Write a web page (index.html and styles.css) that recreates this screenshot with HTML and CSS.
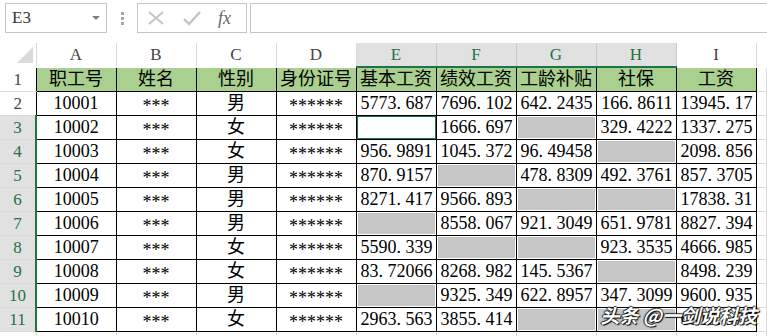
FILE: index.html
```html
<!DOCTYPE html>
<html lang="zh-CN">
  <head>
    <meta charset="UTF-8" />
    <meta name="viewport" content="width=device-width, initial-scale=1.0" />
    <title>工资表</title>
    <link rel="stylesheet" href="styles.css">
  </head>
  <body>
    <div class="toolbar">
      <div class="name-box">
        <span>E3</span>
        <svg class="caret" width="8" height="4" viewBox="0 0 8 4"><polygon points="0,0 8,0 4,4" fill="#808080"/></svg>
      </div>
      <div class="grip">
        <svg width="3" height="13" viewBox="0 0 3 13"><rect x="0" y="0" width="3" height="3" fill="#a6a6a6"/><rect x="0" y="5" width="3" height="3" fill="#a6a6a6"/><rect x="0" y="10" width="3" height="3" fill="#a6a6a6"/></svg>
      </div>
      <div class="formula-buttons">
        <svg width="16" height="14" viewBox="0 0 16 14"><path d="M1 1 L15 13 M15 1 L1 13" stroke="#c4c4c4" stroke-width="2"/></svg>
        <svg width="18" height="15" viewBox="0 0 18 15"><path d="M1 8 L6 13 L17 1" stroke="#c4c4c4" stroke-width="2.4" fill="none"/></svg>
        <span class="fx">fx</span>
      </div>
      <div class="formula-bar"></div>
    </div>

    <div class="sheet">
      <table>
        <colgroup>
          <col class="c-rh">
          <col class="c-col"><col class="c-col"><col class="c-col"><col class="c-col"><col class="c-col">
          <col class="c-col"><col class="c-col"><col class="c-col"><col class="c-col">
          <col>
        </colgroup>
        <tr class="col-head">
          <th class="corner"><svg width="16" height="16" viewBox="0 0 16 16"><polygon points="16,0 16,16 0,16" fill="#dadada"/></svg></th>
          <th>A</th><th>B</th><th>C</th><th>D</th>
          <th class="on">E</th><th class="on">F</th><th class="on">G</th><th class="on">H</th>
          <th>I</th><th class="empty"></th>
        </tr>
        <tr class="title">
          <th class="rh">1</th>
          <td>职工号</td><td>姓名</td><td>性别</td><td>身份证号</td><td>基本工资</td><td>绩效工资</td><td>工龄补贴</td><td>社保</td><td>工资</td>
          <td class="grid"></td>
        </tr>
        <tr>
          <th class="rh">2</th>
          <td>10001</td><td class="mask">***</td><td>男</td><td class="mask">******</td>
          <td class="num">5773<span class="pt">.</span>687</td><td class="num">7696<span class="pt">.</span>102</td><td class="num">642<span class="pt">.</span>2435</td><td class="num">166<span class="pt">.</span>8611</td><td class="num">13945<span class="pt">.</span>17</td>
          <td class="grid"></td>
        </tr>
        <tr>
          <th class="rh on">3</th>
          <td>10002</td><td class="mask">***</td><td>女</td><td class="mask">******</td>
          <td class="active"></td><td class="num">1666<span class="pt">.</span>697</td><td class="sel"></td><td class="num">329<span class="pt">.</span>4222</td><td class="num">1337<span class="pt">.</span>275</td>
          <td class="grid"></td>
        </tr>
        <tr>
          <th class="rh on">4</th>
          <td>10003</td><td class="mask">***</td><td>女</td><td class="mask">******</td>
          <td class="num">956<span class="pt">.</span>9891</td><td class="num">1045<span class="pt">.</span>372</td><td class="num">96<span class="pt">.</span>49458</td><td class="sel"></td><td class="num">2098<span class="pt">.</span>856</td>
          <td class="grid"></td>
        </tr>
        <tr>
          <th class="rh on">5</th>
          <td>10004</td><td class="mask">***</td><td>男</td><td class="mask">******</td>
          <td class="num">870<span class="pt">.</span>9157</td><td class="sel"></td><td class="num">478<span class="pt">.</span>8309</td><td class="num">492<span class="pt">.</span>3761</td><td class="num">857<span class="pt">.</span>3705</td>
          <td class="grid"></td>
        </tr>
        <tr>
          <th class="rh on">6</th>
          <td>10005</td><td class="mask">***</td><td>男</td><td class="mask">******</td>
          <td class="num">8271<span class="pt">.</span>417</td><td class="num">9566<span class="pt">.</span>893</td><td class="sel"></td><td class="sel"></td><td class="num">17838<span class="pt">.</span>31</td>
          <td class="grid"></td>
        </tr>
        <tr>
          <th class="rh on">7</th>
          <td>10006</td><td class="mask">***</td><td>男</td><td class="mask">******</td>
          <td class="sel"></td><td class="num">8558<span class="pt">.</span>067</td><td class="num">921<span class="pt">.</span>3049</td><td class="num">651<span class="pt">.</span>9781</td><td class="num">8827<span class="pt">.</span>394</td>
          <td class="grid"></td>
        </tr>
        <tr>
          <th class="rh on">8</th>
          <td>10007</td><td class="mask">***</td><td>女</td><td class="mask">******</td>
          <td class="num">5590<span class="pt">.</span>339</td><td class="sel"></td><td class="sel"></td><td class="num">923<span class="pt">.</span>3535</td><td class="num">4666<span class="pt">.</span>985</td>
          <td class="grid"></td>
        </tr>
        <tr>
          <th class="rh on">9</th>
          <td>10008</td><td class="mask">***</td><td>女</td><td class="mask">******</td>
          <td class="num">83<span class="pt">.</span>72066</td><td class="num">8268<span class="pt">.</span>982</td><td class="num">145<span class="pt">.</span>5367</td><td class="sel"></td><td class="num">8498<span class="pt">.</span>239</td>
          <td class="grid"></td>
        </tr>
        <tr>
          <th class="rh on">10</th>
          <td>10009</td><td class="mask">***</td><td>男</td><td class="mask">******</td>
          <td class="sel"></td><td class="num">9325<span class="pt">.</span>349</td><td class="num">622<span class="pt">.</span>8957</td><td class="num">347<span class="pt">.</span>3099</td><td class="num">9600<span class="pt">.</span>935</td>
          <td class="grid"></td>
        </tr>
        <tr>
          <th class="rh on">11</th>
          <td>10010</td><td class="mask">***</td><td>女</td><td class="mask">******</td>
          <td class="num">2963<span class="pt">.</span>563</td><td class="num">3855<span class="pt">.</span>414</td><td class="sel"></td><td class="sel"></td><td class="num">6818<span class="pt">.</span>977</td>
          <td class="grid"></td>
        </tr>
        <tr class="blank">
          <th class="rh"></th>
          <td class="grid"></td><td class="grid"></td><td class="grid"></td><td class="grid"></td><td class="grid"></td>
          <td class="grid"></td><td class="grid"></td><td class="grid"></td><td class="grid"></td><td class="grid"></td>
        </tr>
      </table>
      <div class="watermark">头条 @一剑说科技</div>
    </div>
  </body>
</html>
```

FILE: styles.css
```css
body {
  margin: 0;
  background: #fff;
  font-family: "Liberation Serif", "Noto Sans CJK SC", serif;
  color: #000;
  overflow: hidden;
}

/* formula toolbar */
.toolbar {
  display: flex;
  height: 30px;
  padding: 3px 0 0 5px;
}
.name-box {
  box-sizing: border-box;
  width: 102px;
  height: 30px;
  border: 1px solid #c6c6c6;
  display: flex;
  align-items: center;
  justify-content: space-between;
  padding: 0 6px 0 6px;
  font-size: 17px;
  color: #333;
}
.grip {
  width: 30px;
  display: grid;
  place-items: center;
}
.formula-buttons {
  box-sizing: border-box;
  width: 110px;
  height: 30px;
  border: 1px solid #c6c6c6;
  display: flex;
  align-items: center;
  gap: 19px;
  padding-left: 10px;
}
.fx {
  font-style: italic;
  font-size: 18px;
  color: #666;
  margin-left: -2px;
}
.formula-bar {
  flex: 1;
  height: 30px;
  box-sizing: border-box;
  margin-left: 3px;
  border: 1px solid #c6c6c6;
  border-right: none;
}

/* sheet grid */
.sheet {
  position: relative;
  margin-top: 10px;
}
table {
  border-collapse: collapse;
  table-layout: fixed;
  width: 767px;
}
.c-rh {
  width: 36px;
}
.c-col {
  width: 80px;
}
th,
td {
  box-sizing: border-box;
  padding: 0;
  height: 24px;
  line-height: 23px;
  font-size: 18px;
  font-weight: normal;
  white-space: nowrap;
  overflow: hidden;
  text-align: center;
  vertical-align: middle;
}
td {
  border: 1px solid #000;
}

.col-head th {
  height: 23px;
  font-size: 17px;
  color: #444;
  border-right: 1px solid #dadada;
  border-bottom: 1px solid #fff;
}
.col-head th.on {
  background: #e1e1e1;
  color: #217346;
  border-right-color: #c8c8c8;
  border-bottom: 2px solid #217346;
}
.col-head th.empty {
  border-right: none;
}
.corner {
  vertical-align: top;
}
.corner svg {
  display: block;
  margin: 4px 3px 0 auto;
}

.rh {
  font-size: 17px;
  color: #444;
  border-right: 1px solid #000;
  border-bottom: 1px solid #dadada;
}
.rh.on {
  background: #e1e1e1;
  color: #217346;
  border-right: 2px solid #217346;
}
.blank .rh {
  border-right-color: #dadada;
}

.title td {
  background: #a9d08e;
}
.title td.grid {
  background: #fff;
}
td.grid {
  border-color: #dadada;
}
.mask {
  padding-top: 6px;
  line-height: 17px;
}
.num {
  text-align: right;
  padding-right: 3px;
}
.pt {
  display: inline-block;
  width: 9px;
  text-align: left;
}
.sel {
  background: #c6c6c6;
  box-shadow: inset 0 0 0 1px #fff;
}
.active {
  box-shadow: inset 0 0 0 1px #217346;
}

.watermark {
  position: absolute;
  top: 258px;
  right: 10px;
  font-family: "Noto Sans CJK SC", sans-serif;
  font-size: 19px;
  font-weight: bold;
  color: #fff;
  font-style: italic;
  text-shadow: 1px 1px 1px #000, -1px 0 1px #222, 0 -1px 1px #222;
}
```
